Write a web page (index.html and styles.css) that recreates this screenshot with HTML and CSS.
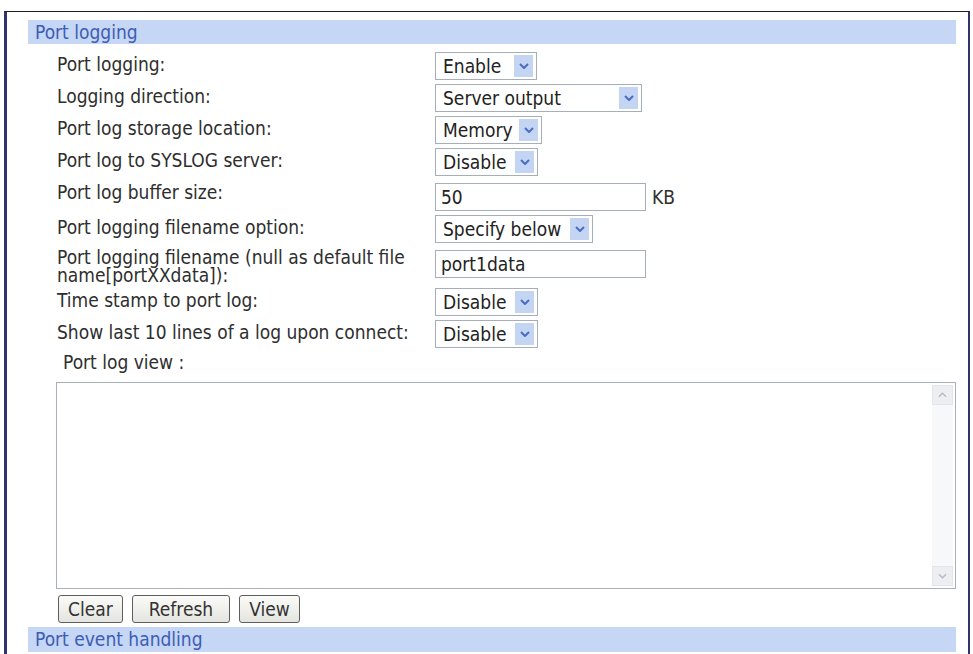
FILE: index.html
```html
<!DOCTYPE html>
<html lang="en">
<head>
<meta charset="utf-8">
<title>Port logging</title>
<link rel="stylesheet" href="styles.css">
</head>
<body>
<div class="frame">
  <div class="section-head">Port logging</div>
  <div class="form">
    <div class="label">Port logging:</div>
    <div class="field"><span class="select w-en"><span class="val">Enable</span><span class="arrow"><svg viewBox="0 0 10 6" width="10" height="6"><path d="M1 1 L5 5 L9 1" fill="none" stroke="#4a6cc2" stroke-width="2"/></svg></span></span></div>

    <div class="label">Logging direction:</div>
    <div class="field"><span class="select w-dir"><span class="val">Server output</span><span class="arrow"><svg viewBox="0 0 10 6" width="10" height="6"><path d="M1 1 L5 5 L9 1" fill="none" stroke="#4a6cc2" stroke-width="2"/></svg></span></span></div>

    <div class="label">Port log storage location:</div>
    <div class="field"><span class="select w-mem"><span class="val">Memory</span><span class="arrow"><svg viewBox="0 0 10 6" width="10" height="6"><path d="M1 1 L5 5 L9 1" fill="none" stroke="#4a6cc2" stroke-width="2"/></svg></span></span></div>

    <div class="label">Port log to SYSLOG server:</div>
    <div class="field"><span class="select w-dis"><span class="val">Disable</span><span class="arrow"><svg viewBox="0 0 10 6" width="10" height="6"><path d="M1 1 L5 5 L9 1" fill="none" stroke="#4a6cc2" stroke-width="2"/></svg></span></span></div>

    <div class="label">Port log buffer size:</div>
    <div class="field field-input"><input class="text" type="text" value="50"><span class="unit">KB</span></div>

    <div class="label">Port logging filename option:</div>
    <div class="field"><span class="select w-spec"><span class="val">Specify below</span><span class="arrow"><svg viewBox="0 0 10 6" width="10" height="6"><path d="M1 1 L5 5 L9 1" fill="none" stroke="#4a6cc2" stroke-width="2"/></svg></span></span></div>

    <div class="label label-wrap">Port logging filename (null as default file name[portXXdata]):</div>
    <div class="field field-input"><input class="text" type="text" value="port1data"></div>

    <div class="label">Time stamp to port log:</div>
    <div class="field"><span class="select w-dis"><span class="val">Disable</span><span class="arrow"><svg viewBox="0 0 10 6" width="10" height="6"><path d="M1 1 L5 5 L9 1" fill="none" stroke="#4a6cc2" stroke-width="2"/></svg></span></span></div>

    <div class="label">Show last 10 lines of a log upon connect:</div>
    <div class="field"><span class="select w-dis"><span class="val">Disable</span><span class="arrow"><svg viewBox="0 0 10 6" width="10" height="6"><path d="M1 1 L5 5 L9 1" fill="none" stroke="#4a6cc2" stroke-width="2"/></svg></span></span></div>
  </div>

  <div class="logview-label">Port log view :</div>
  <div class="logview">
    <textarea class="logtext"></textarea>
    <div class="scrollbar">
      <span class="sb-btn"><svg viewBox="0 0 10 6" width="9" height="6"><path d="M1 5 L5 1 L9 5" fill="none" stroke="#b4bac4" stroke-width="1.5"/></svg></span>
      <span class="sb-track"></span>
      <span class="sb-btn"><svg viewBox="0 0 10 6" width="9" height="6"><path d="M1 1 L5 5 L9 1" fill="none" stroke="#b4bac4" stroke-width="1.5"/></svg></span>
    </div>
  </div>
  <div class="buttons">
    <button class="btn" type="button">Clear</button>
    <button class="btn btn-wide" type="button">Refresh</button>
    <button class="btn" type="button">View</button>
  </div>
  <div class="section-head section-head-2">Port event handling</div>
</div>
</body>
</html>
```

FILE: styles.css
```css
html, body {
  margin: 0;
  padding: 0;
  background: #ffffff;
  height: 100%;
  overflow: hidden;
}

body {
  font-family: "DejaVu Sans Condensed", "DejaVu Sans", sans-serif;
  font-stretch: condensed;
  font-size: 19px;
  line-height: 20px;
  color: #2e2e2e;
}

.frame {
  margin: 11px 3px 0 4px;
  border-top: 1px solid #1c1c1c;
  border-left: 3px solid #32326c;
  border-right: 2px solid #32326c;
  padding: 8px 12px 0 21px;
  height: calc(100vh - 11px);
  box-sizing: border-box;
  overflow: hidden;
}

.section-head {
  height: 24px;
  line-height: 24px;
  background: #c6d6f5;
  color: #3c5db3;
  padding-left: 7px;
}

.section-head-2 {
  margin-top: 4px;
  height: 25px;
}

.form {
  display: grid;
  grid-template-columns: 378px 1fr;
  row-gap: 4px;
  padding-left: 29px;
  margin-top: 8px;
}

.label {
  padding-top: 2px;
}

.label-wrap {
  line-height: 18px;
  padding-top: 1px;
  padding-right: 8px;
}

.field {
  display: flex;
  align-items: center;
  height: 28px;
}

.field-input {
  margin-top: 3px;
}

.select {
  box-sizing: border-box;
  height: 28px;
  border: 1px solid #a6aeb9;
  background: #ffffff;
  display: flex;
  align-items: center;
  justify-content: space-between;
  padding: 0 3px 0 7px;
  color: #222;
}

.w-en { width: 102px; }
.w-dir { width: 207px; }
.w-mem { width: 107px; }
.w-dis { width: 103px; }
.w-spec { width: 158px; }

.arrow {
  width: 19px;
  height: 22px;
  background: #c4d4f3;
  display: flex;
  align-items: center;
  justify-content: center;
}

.text {
  box-sizing: border-box;
  width: 211px;
  height: 28px;
  border: 1px solid #a6aeb9;
  padding: 0 5px;
  margin: 0;
  font: inherit;
  color: #222;
  background: #fff;
  outline: none;
}

.unit {
  margin-left: 6px;
}

.logview-label {
  margin: 4px 0 0 35px;
}

.logview {
  margin: 10px 0 0 28px;
  height: 207px;
  box-sizing: border-box;
  border: 1px solid #a9b0ba;
  display: flex;
  padding: 2px 2px 2px 0;
  background: #fff;
}

.logtext {
  flex: 1;
  border: none;
  resize: none;
  outline: none;
  margin: 0;
  font: inherit;
  background: #fff;
}

.scrollbar {
  width: 21px;
  display: flex;
  flex-direction: column;
  background: #f7f8fa;
}

.sb-btn {
  height: 20px;
  background: #eceef2;
  border: 1px solid #e2e5ea;
  box-sizing: border-box;
  display: flex;
  align-items: center;
  justify-content: center;
}

.sb-track {
  flex: 1;
}

.buttons {
  display: flex;
  gap: 9px;
  margin: 6px 0 0 30px;
}

.btn {
  height: 28px;
  box-sizing: border-box;
  border: 1px solid #5e5e5e;
  border-radius: 3px;
  background: linear-gradient(#fbfbf9, #e4e4df);
  font: inherit;
  color: #333;
  padding: 0 9px;
  margin: 0;
}

.btn-wide {
  padding: 0 16px;
}
```
